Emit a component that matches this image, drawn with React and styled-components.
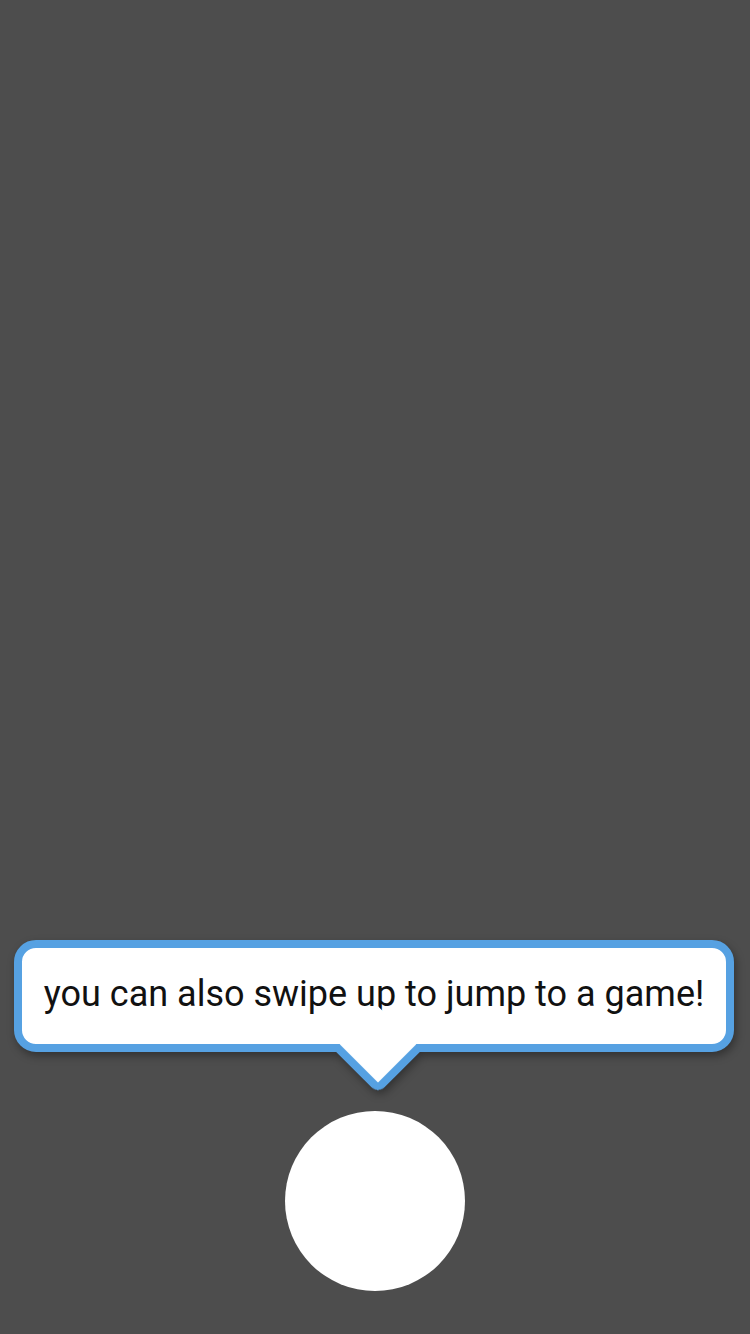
import React from 'react';
import styled, { createGlobalStyle } from 'styled-components';

const GlobalStyle = createGlobalStyle`
  html, body {
    margin: 0;
    padding: 0;
    background: #4d4d4d;
  }
  * {
    box-sizing: border-box;
  }
`;

const Screen = styled.div`
  width: 750px;
  height: 1334px;
  background: #4d4d4d;
  display: flex;
  flex-direction: column;
  align-items: center;
  justify-content: flex-end;
  padding-bottom: 43px;
  font-family: Roboto, 'Liberation Sans', sans-serif;
`;

const Hint = styled.div`
  filter: drop-shadow(2px 4px 4px rgba(0, 0, 0, 0.35));
  margin-bottom: 59px;
`;

const Bubble = styled.div`
  position: relative;
  width: 720px;
  height: 112px;
  margin-left: -2px;
  background: #fff;
  border: 8px solid #56a1e2;
  border-radius: 22px;
  display: flex;
  align-items: center;
  justify-content: center;
  padding-bottom: 4px;

  &::after {
    content: '';
    position: absolute;
    left: 50%;
    bottom: -37px;
    width: 54px;
    height: 54px;
    margin-left: -27px;
    background: #fff;
    border-right: 8px solid #56a1e2;
    border-bottom: 8px solid #56a1e2;
    border-bottom-right-radius: 9px;
    transform: rotate(45deg);
  }
`;

const Message = styled.span`
  font-size: 36px;
  color: #111;
  white-space: nowrap;
`;

const JumpButton = styled.div`
  width: 180px;
  height: 180px;
  border-radius: 50%;
  background: #fff;
`;

export default function App() {
  return (
    <Screen>
      <GlobalStyle />
      <Hint>
        <Bubble>
          <Message>you can also swipe up to jump to a game!</Message>
        </Bubble>
      </Hint>
      <JumpButton />
    </Screen>
  );
}
